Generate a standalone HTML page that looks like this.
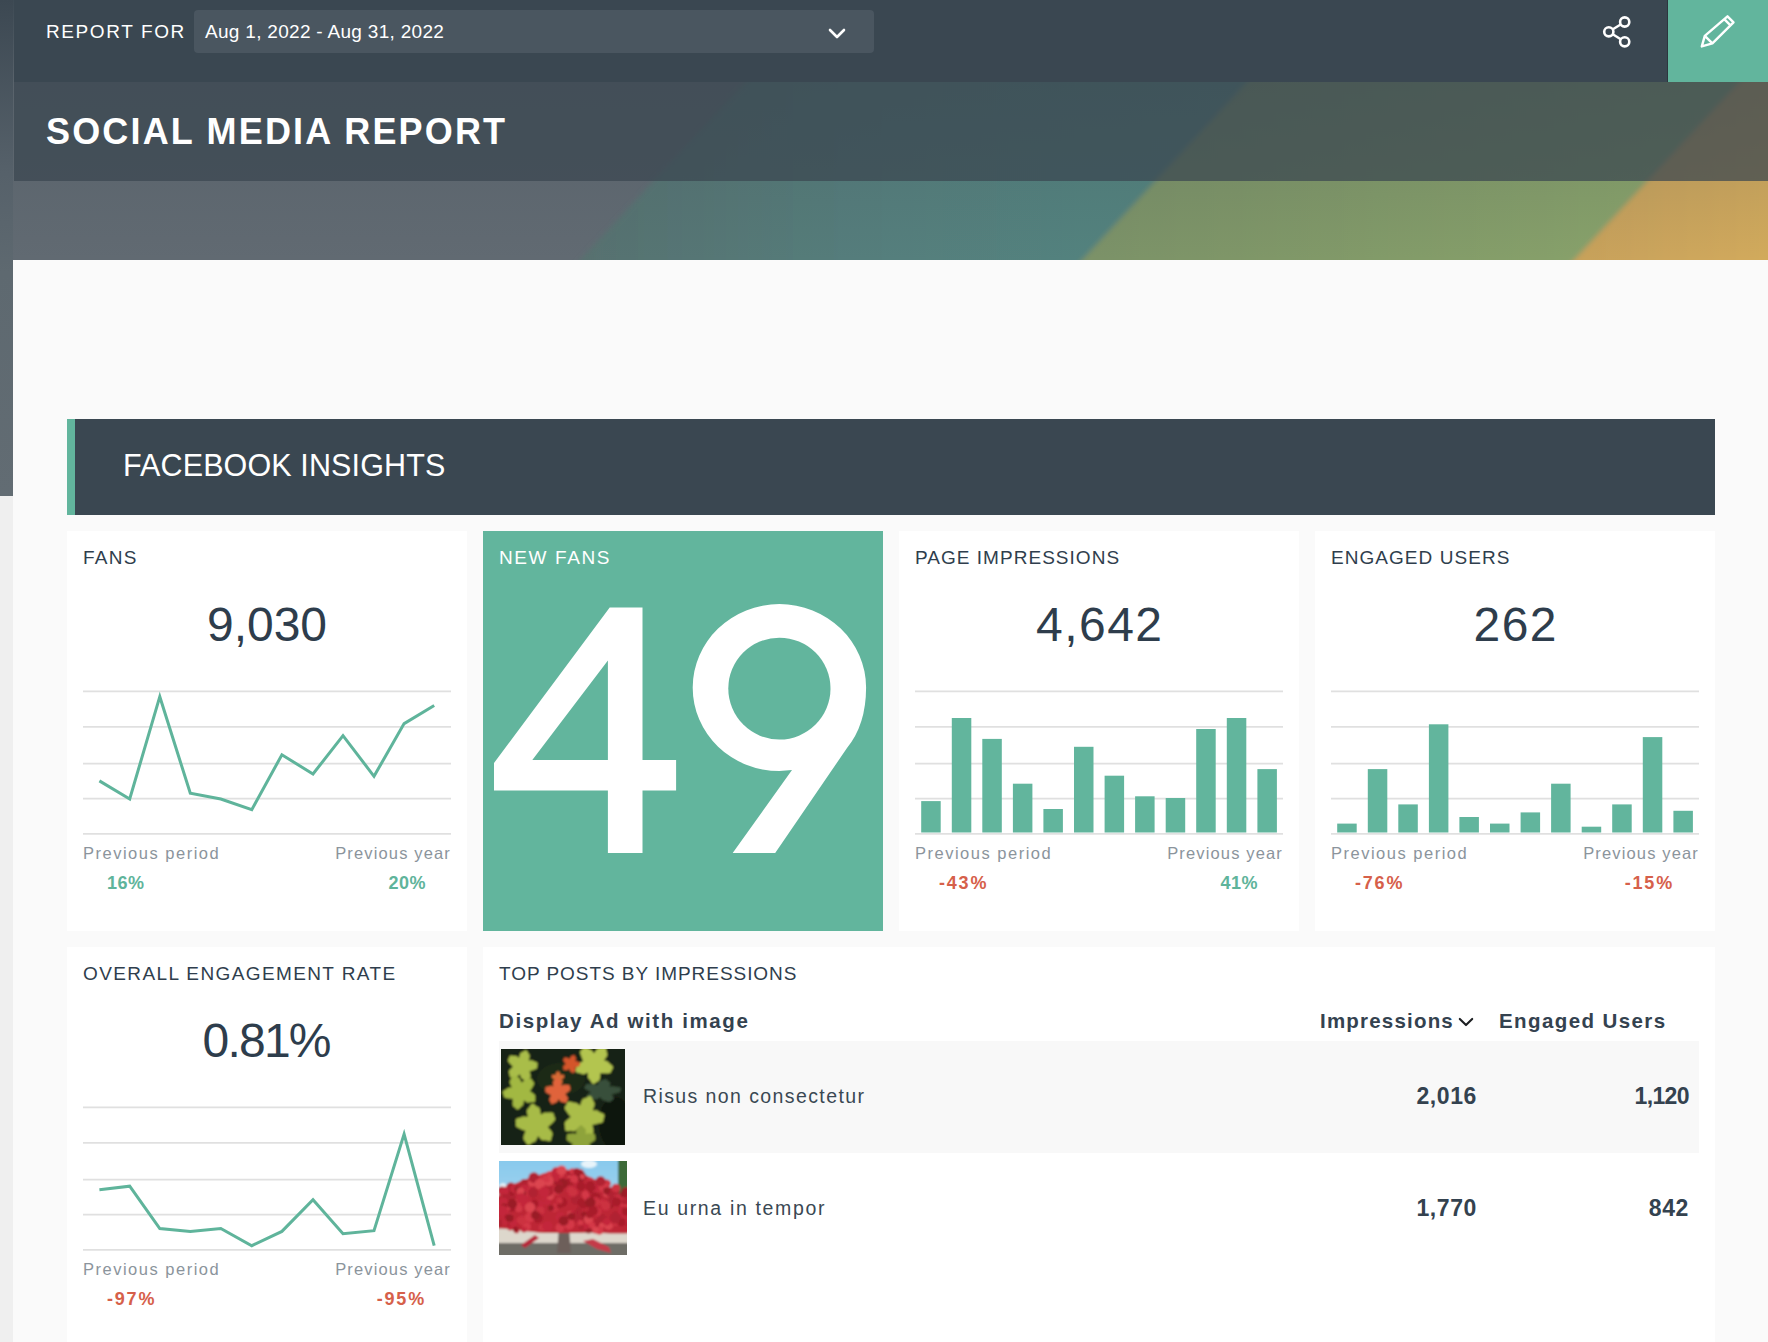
<!DOCTYPE html>
<html><head><meta charset="utf-8">
<style>
*{margin:0;padding:0;box-sizing:border-box}
html,body{width:1768px;height:1342px;overflow:hidden;background:#efefef;font-family:"Liberation Sans",sans-serif}
.abs{position:absolute}
.t{position:absolute;white-space:nowrap;line-height:1}
#hdr{position:absolute;left:0;top:0;width:1768px;height:496px}
#content{position:absolute;left:13px;top:260px;width:1755px;height:1082px;background:#fafafa}
.card{position:absolute;background:#fff}
.ctitle{position:absolute;left:16px;top:16.5px;font-size:19px;color:#2f3e4d;letter-spacing:1.3px;line-height:1}
.big{position:absolute;left:0;width:400px;top:69.5px;text-align:center;font-size:48px;color:#2e3d4c;line-height:1}
.prev{position:absolute;top:314px;font-size:16.5px;color:#8b949c;letter-spacing:1.3px;line-height:1}
.pct{position:absolute;top:343px;font-size:18px;font-weight:bold;letter-spacing:0.5px;line-height:1}
.pp{left:16px;letter-spacing:1.5px}.py{right:16px;letter-spacing:1.15px}.pl{left:40px}.pr{right:41px}
.g{color:#5fb49b}.r{color:#d6604a}
</style></head><body>
<div id="hdr">
<svg width="1768" height="496" viewBox="0 0 1768 496" style="position:absolute;left:0;top:0">
<defs>
<filter id="soft" x="-5%" y="-5%" width="110%" height="110%"><feGaussianBlur stdDeviation="2.5"/></filter>
<linearGradient id="gteal" gradientUnits="userSpaceOnUse" x1="560" y1="0" x2="1300" y2="0"><stop offset="0" stop-color="#58706f"/><stop offset="0.45" stop-color="#547f7d"/><stop offset="1" stop-color="#52857f"/></linearGradient>
<linearGradient id="ggreen" gradientUnits="userSpaceOnUse" x1="1060" y1="0" x2="1760" y2="0"><stop offset="0" stop-color="#7b9167"/><stop offset="1" stop-color="#8ba66b"/></linearGradient>
<linearGradient id="gorange" gradientUnits="userSpaceOnUse" x1="1550" y1="0" x2="1768" y2="0"><stop offset="0" stop-color="#c6a05a"/><stop offset="1" stop-color="#d2aa5c"/></linearGradient>
<linearGradient id="fade" x1="0" y1="0" x2="0" y2="1">
<stop offset="0" stop-color="#3a4751" stop-opacity="0.9"/>
<stop offset="0.32" stop-color="#3a4751" stop-opacity="0.2"/>
<stop offset="0.7" stop-color="#3a4751" stop-opacity="0.1"/>
<stop offset="1" stop-color="#3a4751" stop-opacity="0"/>
</linearGradient>
<linearGradient id="strip" x1="0" y1="0" x2="0" y2="1">
<stop offset="0" stop-color="#3c4852"/>
<stop offset="0.35" stop-color="#56616a"/>
<stop offset="0.55" stop-color="#5e6970"/>
<stop offset="1" stop-color="#626c73"/>
</linearGradient>
</defs>
<rect x="0" y="0" width="1768" height="260" fill="#616a72"/>
<g filter="url(#soft)">
<polygon points="840.4,-20 1342.4,-20 1054.1,290 552.1,290" fill="url(#gteal)"/>
<polygon points="1342.4,-20 1834.4,-20 1546.1,290 1054.1,290" fill="url(#ggreen)"/>
<polygon points="1834.4,-20 1900,-20 1900,290 1546.1,290" fill="url(#gorange)"/>
</g>
<rect x="0" y="0" width="1768" height="260" fill="url(#fade)"/>
<rect x="0" y="0" width="13" height="496" fill="url(#strip)"/>
</svg>
<!-- top bar -->
<div class="abs" style="left:14px;top:0;width:1754px;height:82px;background:#3a4751"></div>
<!-- title band -->
<div class="abs" style="left:14px;top:82px;width:1754px;height:99px;background:rgba(58,71,81,0.72)"></div>
<div class="t" id="rf" style="left:46px;top:22px;font-size:19px;color:#fff;letter-spacing:1.6px">REPORT FOR</div>
<div class="abs" style="left:194px;top:10px;width:680px;height:43px;background:#4a5660;border-radius:4px"></div>
<div class="t" id="date" style="left:205px;top:22px;font-size:19px;color:#fff;letter-spacing:0.3px">Aug 1, 2022 - Aug 31, 2022</div>
<svg class="abs" style="left:827px;top:27.5px" width="20" height="12" viewBox="0 0 20 12"><polyline points="3,2 10,9 17,2" fill="none" stroke="#fff" stroke-width="2.6" stroke-linecap="round" stroke-linejoin="round"/></svg>
<div class="t" id="smr" style="left:46px;top:114px;font-size:36px;font-weight:bold;color:#fff;letter-spacing:2.17px">SOCIAL MEDIA REPORT</div>
<!-- share icon -->
<svg class="abs" style="left:1596px;top:10px" width="40" height="44" viewBox="1596 10 40 44">
<line x1="1608.8" y1="31.8" x2="1624.7" y2="22" stroke="#fff" stroke-width="2.5"/>
<line x1="1608.8" y1="31.8" x2="1624.7" y2="41.8" stroke="#fff" stroke-width="2.5"/>
<circle cx="1624.7" cy="22" r="4.6" fill="#3a4751" stroke="#fff" stroke-width="2.6"/>
<circle cx="1608.8" cy="31.8" r="4.6" fill="#3a4751" stroke="#fff" stroke-width="2.6"/>
<circle cx="1624.7" cy="41.8" r="4.6" fill="#3a4751" stroke="#fff" stroke-width="2.6"/>
</svg>
<!-- edit button -->
<div class="abs" style="left:1667px;top:0;width:1px;height:82px;background:#2c363e"></div>
<div class="abs" style="left:1668px;top:0;width:100px;height:82px;background:#62b59d"></div>
<svg class="abs" style="left:1690px;top:4.2px" width="56" height="56" viewBox="1690 5 56 56">
<path d="M1727.5,17.3 L1733.5,23.3 L1712.4,44.4 L1701.8,47.4 L1704.8,36.8 Z M1724.5,20.3 L1730.5,26.3 M1704.8,36.8 L1712.4,44.4" fill="none" stroke="#fff" stroke-width="2.4" stroke-linejoin="round"/>
</svg>
</div>

<div id="content"></div>

<!-- Facebook insights bar -->
<div class="abs" style="left:67px;top:419px;width:1648px;height:96px;background:#3a4751"></div>
<div class="abs" style="left:67px;top:419px;width:8px;height:96px;background:#62b59d"></div>
<div class="t" id="fbi" style="left:123px;top:450px;font-size:30.5px;color:#fff;letter-spacing:0.12px">FACEBOOK INSIGHTS</div>

<!-- card 1 FANS -->
<div class="card" style="left:67px;top:531px;width:400px;height:400px">
<div class="ctitle" id="c1t">FANS</div>
<div class="big" id="c1n">9,030</div>
<svg class="abs" style="left:0;top:0" width="400" height="400" viewBox="67 531 400 400">
<g stroke="#e0e0e0" stroke-width="1.7">
<line x1="83" y1="691.4" x2="451" y2="691.4"/><line x1="83" y1="726.8" x2="451" y2="726.8"/><line x1="83" y1="763.7" x2="451" y2="763.7"/><line x1="83" y1="798.7" x2="451" y2="798.7"/><line x1="83" y1="833.8" x2="451" y2="833.8"/>
</g>
<polyline fill="none" stroke="#5fb49b" stroke-width="3" stroke-linejoin="miter" points="99.4,780.9 129.7,799 159.8,696.7 190.3,793.3 220.8,799 251.8,809.6 281.9,754.8 313,774 343,735.6 374,776.3 404.1,723.6 434.2,705.5"/>
</svg>
<div class="prev pp" id="c1pp">Previous period</div>
<div class="prev py" id="c1py">Previous year</div>
<div class="pct g pl" id="c1a">16%</div>
<div class="pct g pr" id="c1b">20%</div>
</div>

<!-- card 2 NEW FANS -->
<div class="card" style="left:483px;top:531px;width:400px;height:400px;background:#62b59d">
<div class="ctitle" style="color:#fff;letter-spacing:1.6px">NEW FANS</div>
<svg class="abs" style="left:0;top:0" width="400" height="400" viewBox="483 531 400 400">
<path fill="#fff" d="M609.7,607.5 L642.5,607.5 L642.5,760 L676.1,760 L676.1,790.6 L642.5,790.6 L642.5,853 L607.9,853 L607.9,790.6 L494,790.6 L494,763 Z M532.3,760 L607.9,760 L607.9,660.4 Z" fill-rule="evenodd"/>
<path fill="#fff" d="M732.7,853 L775.2,853 L847,748 Q866,725 866.1,687.6 A86.7,83.5 0 0 0 779.4,604.1 A86.7,83.5 0 0 0 692.7,687.6 A86.7,83.5 0 0 0 779.4,771.1 L792,770 Z"/>
<ellipse cx="779.4" cy="688.6" rx="51.1" ry="50.9" fill="#62b59d"/>
</svg>
</div>

<!-- card 3 PAGE IMPRESSIONS -->
<div class="card" style="left:899px;top:531px;width:400px;height:400px">
<div class="ctitle" style="letter-spacing:1.03px">PAGE IMPRESSIONS</div>
<div class="big" style="letter-spacing:1.5px;text-indent:1.5px">4,642</div>
<svg class="abs" style="left:0;top:0" width="400" height="400" viewBox="899 531 400 400">
<g stroke="#e0e0e0" stroke-width="1.7">
<line x1="915" y1="691.4" x2="1283" y2="691.4"/><line x1="915" y1="726.8" x2="1283" y2="726.8"/><line x1="915" y1="763.7" x2="1283" y2="763.7"/><line x1="915" y1="798.7" x2="1283" y2="798.7"/><line x1="915" y1="833.8" x2="1283" y2="833.8"/>
</g>
<g fill="#62b59d"><rect x="921.2" y="801.1" width="19.5" height="31.4"/><rect x="951.8" y="718.0" width="19.5" height="114.5"/><rect x="982.3" y="738.9" width="19.5" height="93.6"/><rect x="1012.9" y="783.7" width="19.5" height="48.8"/><rect x="1043.4" y="809.0" width="19.5" height="23.5"/><rect x="1074.0" y="746.8" width="19.5" height="85.7"/><rect x="1104.6" y="775.7" width="19.5" height="56.8"/><rect x="1135.1" y="796.3" width="19.5" height="36.2"/><rect x="1165.7" y="798.0" width="19.5" height="34.5"/><rect x="1196.2" y="729.0" width="19.5" height="103.5"/><rect x="1226.8" y="718.0" width="19.5" height="114.5"/><rect x="1257.4" y="769.1" width="19.5" height="63.4"/></g>
</svg>
<div class="prev pp">Previous period</div>
<div class="prev py">Previous year</div>
<div class="pct r pl" style="letter-spacing:1.8px">-43%</div>
<div class="pct g pr">41%</div>
</div>

<!-- card 4 ENGAGED USERS -->
<div class="card" style="left:1315px;top:531px;width:400px;height:400px">
<div class="ctitle" style="letter-spacing:1.05px">ENGAGED USERS</div>
<div class="big" style="letter-spacing:1.5px;text-indent:1.5px">262</div>
<svg class="abs" style="left:0;top:0" width="400" height="400" viewBox="1315 531 400 400">
<g stroke="#e0e0e0" stroke-width="1.7">
<line x1="1331" y1="691.4" x2="1699" y2="691.4"/><line x1="1331" y1="726.8" x2="1699" y2="726.8"/><line x1="1331" y1="763.7" x2="1699" y2="763.7"/><line x1="1331" y1="798.7" x2="1699" y2="798.7"/><line x1="1331" y1="833.8" x2="1699" y2="833.8"/>
</g>
<g fill="#62b59d"><rect x="1337.2" y="823.6" width="19.5" height="8.9"/><rect x="1367.8" y="769.1" width="19.5" height="63.4"/><rect x="1398.3" y="804.4" width="19.5" height="28.1"/><rect x="1428.9" y="724.3" width="19.5" height="108.2"/><rect x="1459.4" y="817.0" width="19.5" height="15.5"/><rect x="1490.0" y="823.6" width="19.5" height="8.9"/><rect x="1520.6" y="812.4" width="19.5" height="20.1"/><rect x="1551.1" y="783.7" width="19.5" height="48.8"/><rect x="1581.7" y="826.7" width="19.5" height="5.8"/><rect x="1612.2" y="804.4" width="19.5" height="28.1"/><rect x="1642.8" y="737.1" width="19.5" height="95.4"/><rect x="1673.4" y="810.8" width="19.5" height="21.7"/></g>
</svg>
<div class="prev pp">Previous period</div>
<div class="prev py">Previous year</div>
<div class="pct r pl" style="letter-spacing:1.8px">-76%</div>
<div class="pct r pr" style="letter-spacing:1.8px">-15%</div>
</div>

<!-- card 5 OVERALL ENGAGEMENT RATE -->
<div class="card" style="left:67px;top:947px;width:400px;height:420px">
<div class="ctitle" style="letter-spacing:1.39px">OVERALL ENGAGEMENT RATE</div>
<div class="big" style="letter-spacing:-1.75px;text-indent:-1.75px">0.81%</div>
<svg class="abs" style="left:0;top:0" width="400" height="400" viewBox="67 947 400 400">
<g stroke="#e0e0e0" stroke-width="1.7">
<line x1="83" y1="1107.4" x2="451" y2="1107.4"/><line x1="83" y1="1142.8" x2="451" y2="1142.8"/><line x1="83" y1="1179.7" x2="451" y2="1179.7"/><line x1="83" y1="1214.7" x2="451" y2="1214.7"/><line x1="83" y1="1249.8" x2="451" y2="1249.8"/>
</g>
<polyline fill="none" stroke="#5fb49b" stroke-width="3" points="99.4,1189.8 129.7,1186.2 159.8,1228.5 190.3,1231.4 220.8,1228.5 251.8,1245.7 281.9,1231.4 313,1199.7 343,1233.7 374,1230.7 404.1,1134.1 434.2,1245.7"/>
</svg>
<div class="prev pp">Previous period</div>
<div class="prev py">Previous year</div>
<div class="pct r pl" style="letter-spacing:1.8px">-97%</div>
<div class="pct r pr" style="letter-spacing:1.8px">-95%</div>
</div>

<!-- card 6 TOP POSTS -->
<div class="card" style="left:483px;top:947px;width:1232px;height:420px">
<div class="ctitle" id="c6t" style="letter-spacing:0.95px">TOP POSTS BY IMPRESSIONS</div>
</div>
<div class="t" id="dah" style="left:499px;top:1011px;font-size:20.5px;font-weight:bold;color:#34424f;letter-spacing:1.6px">Display Ad with image</div>
<div class="t" id="imph" style="left:1320px;top:1011px;font-size:20.5px;font-weight:bold;color:#34424f;letter-spacing:1.2px">Impressions</div>
<svg class="abs" style="left:1457px;top:1014px" width="18" height="16" viewBox="0 0 18 16"><polyline points="2.8,4.9 9,11.1 15.2,4.9" fill="none" stroke="#1c1f22" stroke-width="2.1" stroke-linecap="round" stroke-linejoin="round"/></svg>
<div class="t" id="euh" style="left:1499px;top:1011px;font-size:20.5px;font-weight:bold;color:#34424f;letter-spacing:1.4px">Engaged Users</div>
<div class="abs" style="left:499px;top:1041px;width:1200px;height:112px;background:#f8f8f8"></div>
<svg class="abs" id="img1" style="left:501px;top:1049px" width="124" height="96" viewBox="0 0 124 96">
<defs><filter id="lb" x="-10%" y="-10%" width="120%" height="120%"><feGaussianBlur stdDeviation="0.9"/></filter><clipPath id="c1"><rect width="124" height="96"/></clipPath></defs>
<g clip-path="url(#c1)"><g filter="url(#lb)">
<rect x="-5" y="-5" width="134" height="106" fill="#172012"/>
<ellipse cx="60" cy="30" rx="24" ry="16" fill="#1e2b18"/>
<ellipse cx="114" cy="74" rx="16" ry="26" fill="#11150f"/>
<polygon points="36.2,17.0 36.3,18.1 36.1,19.1 35.0,20.0 33.5,20.6 32.1,21.0 31.0,21.4 29.9,21.7 28.9,21.9 28.6,22.5 28.8,23.5 29.2,24.9 29.6,26.5 29.6,28.0 29.2,29.1 28.4,29.7 27.6,30.6 26.9,31.7 26.0,32.4 24.8,32.3 23.5,31.3 22.4,30.4 21.5,30.0 20.6,29.5 19.8,28.4 19.3,26.6 18.9,25.5 18.2,25.7 17.0,26.9 15.7,27.9 14.6,28.1 13.6,27.9 12.4,28.0 10.9,28.3 9.4,28.2 8.7,27.4 8.5,26.1 8.4,24.9 8.1,23.9 7.9,22.8 8.3,21.6 9.3,20.3 10.5,19.2 11.4,18.3 11.8,17.6 11.4,17.0 10.5,16.3 9.8,15.4 8.9,14.4 7.8,13.2 7.0,11.9 7.0,10.8 7.6,9.9 8.0,8.9 8.3,7.8 8.9,6.8 10.1,6.5 11.8,6.7 13.2,7.0 14.3,7.0 15.3,7.1 16.6,7.9 17.6,8.6 18.2,8.4 18.5,7.1 18.9,5.3 19.6,3.9 20.5,3.3 21.5,3.0 22.5,2.5 23.7,1.6 25.0,1.2 26.0,1.7 26.7,3.0 27.2,4.2 27.9,5.0 28.5,5.8 28.8,7.1 28.4,8.8 27.8,10.4 27.8,11.3 28.7,11.4 30.2,11.3 31.4,11.5 32.2,12.0 33.4,12.5 34.9,13.0 36.3,13.8 36.7,14.8 36.4,15.9" fill="#a9bd48"/>
<polygon points="30.1,43.0 31.5,43.9 32.9,45.0 34.0,46.2 34.4,47.4 34.2,48.5 34.1,49.7 34.3,51.1 34.1,52.4 33.0,53.1 31.2,53.2 29.6,53.3 28.5,53.6 27.5,53.8 26.0,53.4 24.4,52.3 23.2,51.6 22.7,52.3 22.6,54.1 22.2,55.9 21.4,56.8 20.5,57.4 19.5,58.3 18.4,59.6 17.2,60.6 15.9,60.4 14.9,59.4 14.0,58.5 13.0,57.9 12.1,57.2 11.6,55.8 11.6,54.0 11.8,52.3 11.9,50.9 11.7,50.0 10.9,49.8 9.7,49.8 8.4,49.6 7.1,49.4 5.3,49.1 3.7,48.6 2.8,47.6 2.7,46.5 2.4,45.3 1.8,44.2 1.6,43.0 2.4,41.8 4.0,40.9 5.4,40.1 6.3,39.4 7.3,38.7 8.8,38.5 10.3,38.4 10.6,37.8 9.9,36.4 9.0,34.6 8.6,33.0 8.9,31.8 9.5,30.9 10.0,29.7 10.4,28.2 11.1,26.9 12.4,26.7 13.9,27.2 15.2,27.8 16.4,28.0 17.5,28.3 18.5,29.2 19.4,30.9 20.1,32.6 20.7,33.4 21.5,32.9 22.7,31.7 23.8,31.0 24.9,30.9 26.2,30.5 27.9,29.8 29.5,29.5 30.6,30.1 31.2,31.2 31.8,32.3 32.6,33.1 33.1,34.2 32.9,35.6 32.0,37.2 31.2,38.6 30.5,39.7 29.8,40.7 29.1,41.6 29.2,42.3" fill="#a2b843"/>
<polygon points="109.1,15.0 110.7,16.2 111.9,17.7 112.0,19.0 111.2,20.2 110.5,21.4 110.1,22.6 109.5,23.7 107.9,24.3 105.9,24.4 104.1,24.3 102.6,24.3 101.2,24.2 100.0,24.0 99.4,24.5 99.2,25.8 99.1,27.6 98.9,29.6 98.3,31.3 97.3,32.3 96.1,32.8 94.9,33.4 93.7,34.4 92.3,34.9 91.0,34.2 89.9,32.5 89.0,31.0 88.1,30.1 87.2,29.3 86.8,27.6 87.0,25.4 87.0,23.9 86.1,23.8 84.3,24.7 82.3,25.3 81.0,25.1 79.9,24.5 78.5,24.1 76.6,23.7 75.0,23.0 74.4,21.8 74.8,20.2 75.2,18.8 75.2,17.5 75.4,16.2 76.5,15.0 78.2,14.0 80.0,13.2 81.4,12.5 82.1,11.9 81.9,11.0 81.2,9.8 80.7,8.5 80.2,7.0 79.4,5.1 79.0,3.3 79.5,2.0 80.5,1.1 81.5,0.2 82.2,-1.0 83.3,-1.8 84.9,-1.7 86.7,-0.7 88.2,0.2 89.4,0.7 90.6,1.3 91.7,2.6 92.6,3.9 93.4,4.0 94.3,2.6 95.5,0.7 96.9,-0.6 98.2,-1.0 99.4,-0.9 100.9,-1.1 102.6,-1.6 104.2,-1.6 105.1,-0.5 105.4,1.2 105.6,2.9 106.0,4.1 106.4,5.3 106.1,6.8 105.0,8.6 103.6,10.3 103.2,11.3 104.2,11.8 106.0,12.2 107.3,13.0 108.0,13.9" fill="#b3c54f"/>
<polygon points="119.8,42.0 119.4,42.8 118.0,43.4 116.2,43.9 114.6,44.3 113.4,44.7 112.0,44.9 111.0,45.2 110.8,45.7 111.3,46.5 112.0,47.6 112.6,48.7 112.7,49.8 112.0,50.5 111.1,51.0 110.3,51.7 109.6,52.6 108.4,53.1 106.9,52.8 105.2,52.2 103.8,51.6 102.7,51.4 101.5,51.1 100.5,50.1 99.8,48.9 99.2,48.3 98.2,48.7 96.8,49.7 95.3,50.4 94.1,50.5 92.8,50.5 91.2,50.7 89.3,51.0 87.7,50.9 86.9,50.2 86.7,49.2 86.4,48.4 85.8,47.7 85.6,46.9 86.2,45.9 87.4,45.0 88.7,44.1 89.6,43.4 89.8,42.9 89.0,42.5 87.9,42.0 86.9,41.4 85.7,40.7 84.2,39.9 83.2,38.9 83.4,38.1 84.0,37.5 84.4,36.7 84.6,35.8 85.4,35.2 87.1,35.0 89.1,35.1 90.8,35.2 92.0,35.1 93.4,35.2 95.0,35.8 96.2,36.1 96.8,35.7 97.0,34.6 97.4,33.3 98.2,32.4 99.2,31.9 100.4,31.6 101.6,31.1 103.0,30.4 104.5,30.1 105.7,30.7 106.6,31.6 107.5,32.4 108.4,32.9 109.2,33.5 109.4,34.5 109.0,35.8 108.6,37.0 108.8,37.5 110.2,37.4 112.0,37.2 113.4,37.4 114.5,37.7 116.1,38.0 118.1,38.3 119.6,38.8 119.9,39.6 119.6,40.4 119.6,41.2" fill="#38503a"/>
<polygon points="49.2,76.0 48.0,76.9 47.1,77.7 47.2,78.6 48.2,79.8 49.6,81.3 50.9,83.1 51.6,84.8 51.4,86.2 50.8,87.5 50.4,89.0 50.2,90.7 49.3,91.9 47.6,92.1 45.5,91.6 43.8,91.2 42.5,91.3 41.1,91.2 39.5,89.9 38.0,88.1 37.0,87.3 36.3,88.4 35.5,90.6 34.4,92.3 33.2,92.9 31.9,93.3 30.4,94.3 28.7,95.5 27.0,95.9 25.7,95.0 24.9,93.5 24.1,92.2 23.1,91.2 22.4,90.0 22.5,88.1 23.1,86.0 23.9,84.1 24.4,82.6 24.2,81.7 23.1,81.3 21.7,80.9 20.3,80.2 18.6,79.5 16.6,78.6 15.1,77.4 14.7,76.0 15.0,74.6 14.9,73.2 14.6,71.7 15.0,70.3 16.6,69.3 18.7,68.8 20.4,68.3 21.6,67.6 23.1,67.4 25.1,67.7 26.5,67.8 26.8,66.9 26.3,64.9 25.9,62.6 26.2,60.7 27.0,59.6 28.0,58.7 28.9,57.3 29.9,55.6 31.2,54.7 32.8,55.1 34.3,56.4 35.7,57.4 36.9,57.9 38.1,58.6 38.9,60.3 39.3,62.6 39.6,64.7 40.2,65.4 41.5,64.8 43.2,63.8 44.7,63.6 46.0,63.7 47.8,63.6 50.0,63.4 51.9,63.8 52.7,64.9 52.9,66.5 53.4,67.8 54.0,69.1 54.2,70.5 53.2,72.1 51.6,73.7 50.3,74.9" fill="#a7bb46"/>
<polygon points="103.1,68.0 102.6,69.4 102.5,70.9 102.3,72.3 101.1,73.5 99.0,74.2 96.9,74.6 95.3,75.1 93.8,75.4 92.4,75.5 91.6,76.1 91.6,77.3 92.0,79.1 92.4,81.3 92.4,83.5 91.8,85.0 90.7,85.9 89.6,86.8 88.5,88.1 87.3,89.3 85.8,89.3 84.1,88.0 82.6,86.5 81.4,85.7 80.2,85.1 79.2,83.8 78.7,81.4 78.3,79.4 77.5,79.1 75.9,80.4 74.0,81.9 72.4,82.3 71.1,81.9 69.6,81.8 67.5,82.0 65.4,81.9 64.2,80.9 64.1,79.2 64.1,77.5 63.8,76.1 63.5,74.7 64.1,73.1 65.5,71.5 67.2,70.1 68.7,68.9 69.5,68.0 69.2,67.1 68.2,66.1 67.2,64.9 66.3,63.5 65.0,61.8 63.9,59.9 63.7,58.3 64.5,57.0 65.3,55.9 65.8,54.4 66.5,53.1 68.0,52.5 70.2,52.9 72.2,53.5 73.8,53.7 75.1,53.9 76.7,54.8 78.1,56.1 79.1,56.3 79.7,54.9 80.4,52.5 81.4,50.6 82.6,49.6 84.0,49.3 85.4,48.8 87.0,47.8 88.8,47.1 90.2,47.6 91.1,49.3 91.8,51.1 92.5,52.4 93.3,53.5 93.7,55.0 93.2,57.2 92.2,59.4 91.7,60.9 92.6,61.4 94.5,61.3 96.4,61.6 97.5,62.4 98.8,63.2 100.7,64.0 102.7,65.1 103.5,66.5" fill="#aabd49"/>
<polygon points="92.9,92.0 91.6,92.8 90.7,93.5 89.7,94.1 88.8,94.5 88.4,95.1 88.7,95.9 89.4,97.0 90.2,98.4 90.8,99.8 90.7,101.0 90.2,101.9 89.7,102.7 89.3,103.9 88.8,105.0 87.7,105.4 86.3,104.9 85.0,104.3 83.9,104.0 83.0,103.9 82.0,103.3 81.0,101.8 80.3,100.6 79.7,100.6 79.0,101.8 78.0,103.3 77.0,103.9 76.1,104.0 75.0,104.3 73.7,104.9 72.3,105.4 71.2,105.0 70.7,103.9 70.3,102.7 69.8,101.9 69.3,101.0 69.2,99.8 69.8,98.4 70.6,97.0 71.3,95.9 71.6,95.1 71.2,94.5 70.3,94.1 69.3,93.5 68.4,92.8 67.1,92.0 65.9,91.0 65.4,89.9 65.6,88.9 65.8,87.9 65.8,86.8 66.0,85.7 66.8,85.0 68.4,84.7 69.9,84.7 71.0,84.4 71.9,84.2 73.2,84.5 74.5,85.0 75.2,84.9 75.2,83.8 75.1,82.0 75.3,80.4 75.9,79.5 76.7,78.9 77.6,78.3 78.4,77.2 79.5,76.3 80.5,76.3 81.6,77.2 82.4,78.3 83.3,78.9 84.1,79.5 84.7,80.4 84.9,82.0 84.8,83.8 84.8,84.9 85.5,85.0 86.8,84.5 88.1,84.2 89.0,84.4 90.1,84.7 91.6,84.7 93.2,85.0 94.0,85.7 94.2,86.8 94.2,87.9 94.4,88.9 94.6,89.9 94.1,91.0" fill="#8ea33b"/>
<polygon points="79.0,15.0 78.8,15.6 78.8,16.2 78.7,16.8 78.2,17.3 77.3,17.6 76.4,17.8 75.7,18.0 75.1,18.2 74.4,18.2 74.1,18.5 74.1,19.0 74.3,19.8 74.5,20.7 74.5,21.6 74.2,22.3 73.7,22.7 73.2,23.0 72.8,23.6 72.3,24.1 71.6,24.1 70.9,23.6 70.3,22.9 69.7,22.6 69.2,22.3 68.8,21.8 68.6,20.8 68.4,19.9 68.1,19.8 67.4,20.3 66.6,20.9 65.9,21.1 65.3,21.0 64.7,20.9 63.8,21.0 62.9,21.0 62.4,20.5 62.3,19.8 62.3,19.1 62.2,18.5 62.1,17.9 62.3,17.2 62.9,16.5 63.6,15.9 64.3,15.4 64.6,15.0 64.5,14.6 64.1,14.2 63.7,13.7 63.3,13.1 62.7,12.4 62.2,11.5 62.2,10.8 62.5,10.3 62.9,9.8 63.1,9.2 63.4,8.6 64.0,8.4 64.9,8.5 65.8,8.8 66.5,8.9 67.0,8.9 67.7,9.4 68.3,9.9 68.8,10.0 69.0,9.4 69.3,8.4 69.7,7.5 70.3,7.1 70.8,7.0 71.5,6.8 72.2,6.3 72.9,6.0 73.5,6.3 73.9,7.0 74.2,7.8 74.5,8.3 74.9,8.8 75.0,9.4 74.8,10.4 74.4,11.3 74.2,12.0 74.5,12.2 75.4,12.1 76.2,12.3 76.6,12.6 77.2,12.9 78.0,13.3 78.9,13.8 79.2,14.4" fill="#d4552c"/>
<polygon points="62.6,29.0 62.0,29.4 61.6,29.7 61.2,29.9 60.8,30.1 60.6,30.3 60.8,30.7 61.1,31.2 61.4,31.8 61.7,32.4 61.7,32.9 61.4,33.3 61.2,33.7 61.0,34.2 60.8,34.6 60.3,34.8 59.7,34.6 59.2,34.3 58.7,34.2 58.3,34.2 57.9,33.9 57.4,33.3 57.1,32.7 56.9,32.7 56.6,33.3 56.1,33.9 55.7,34.2 55.3,34.2 54.8,34.3 54.3,34.6 53.7,34.8 53.2,34.6 53.0,34.2 52.8,33.7 52.6,33.3 52.3,32.9 52.3,32.4 52.6,31.8 52.9,31.2 53.2,30.7 53.4,30.3 53.2,30.1 52.8,29.9 52.4,29.7 52.0,29.4 51.4,29.0 50.9,28.6 50.7,28.1 50.7,27.7 50.9,27.2 50.9,26.8 50.9,26.3 51.3,26.0 52.0,25.9 52.6,25.8 53.1,25.7 53.5,25.6 54.1,25.7 54.6,26.0 54.9,25.9 54.9,25.4 54.9,24.7 55.0,24.0 55.2,23.6 55.6,23.3 56.0,23.0 56.3,22.6 56.8,22.2 57.2,22.2 57.7,22.6 58.0,23.0 58.4,23.3 58.8,23.6 59.0,24.0 59.1,24.7 59.1,25.4 59.1,25.9 59.4,26.0 59.9,25.7 60.5,25.6 60.9,25.7 61.4,25.8 62.0,25.9 62.7,26.0 63.1,26.3 63.1,26.8 63.1,27.2 63.3,27.7 63.3,28.1 63.1,28.6" fill="#d86a36"/>
<polygon points="66.9,43.0 66.1,43.6 65.3,44.2 64.7,44.6 64.5,45.2 65.0,45.9 65.7,46.9 66.5,48.1 67.0,49.2 66.9,50.2 66.5,50.9 66.1,51.8 65.9,52.9 65.4,53.7 64.4,53.9 63.1,53.6 62.0,53.2 61.1,53.1 60.3,53.0 59.3,52.3 58.4,51.1 57.8,50.3 57.3,50.6 56.7,51.9 55.9,53.1 55.1,53.6 54.3,53.7 53.4,54.1 52.2,54.8 51.1,55.1 50.2,54.7 49.8,53.7 49.3,52.8 48.8,52.1 48.3,51.4 48.3,50.3 48.8,49.0 49.4,47.8 49.9,46.8 49.9,46.1 49.4,45.8 48.5,45.4 47.7,45.0 46.8,44.4 45.6,43.8 44.5,43.0 44.2,42.1 44.4,41.2 44.5,40.3 44.3,39.4 44.5,38.5 45.4,37.8 46.8,37.6 48.0,37.4 48.8,37.1 49.7,36.9 50.9,37.1 51.9,37.4 52.3,37.0 52.2,35.9 52.0,34.4 52.2,33.1 52.7,32.3 53.4,31.8 54.0,31.1 54.7,30.1 55.6,29.4 56.5,29.5 57.4,30.3 58.2,31.1 59.0,31.6 59.7,32.0 60.3,33.0 60.5,34.4 60.5,35.8 60.7,36.6 61.5,36.4 62.6,35.8 63.6,35.7 64.4,35.8 65.5,35.9 66.8,35.9 68.1,36.1 68.7,36.8 68.9,37.7 69.0,38.6 69.3,39.5 69.5,40.3 68.9,41.3 67.9,42.2" fill="#e0633a"/>
</g></g></svg>
<div class="t" id="r1" style="left:643px;top:1086.5px;font-size:19.5px;color:#3a4853;letter-spacing:1.4px">Risus non consectetur</div>
<div class="t" id="n1a" style="right:291px;top:1085px;font-size:23px;font-weight:bold;color:#34424f;letter-spacing:0.6px">2,016</div>
<div class="t" id="n1b" style="right:79px;top:1085px;font-size:23px;font-weight:bold;color:#34424f;letter-spacing:-0.6px">1,120</div>
<svg class="abs" id="img2" style="left:499px;top:1161px" width="128" height="94" viewBox="0 0 128 94">
<defs><filter id="tb" x="-10%" y="-10%" width="120%" height="120%"><feGaussianBlur stdDeviation="0.9"/></filter><clipPath id="c2"><rect width="128" height="94"/></clipPath>
<linearGradient id="sky" x1="0" y1="0" x2="0" y2="1"><stop offset="0" stop-color="#86c8ec"/><stop offset="1" stop-color="#c4e4f2"/></linearGradient></defs>
<g clip-path="url(#c2)"><g filter="url(#tb)">
<rect x="-5" y="-5" width="138" height="104" fill="url(#sky)"/>
<ellipse cx="90" cy="3" rx="8" ry="4" fill="#e8f4fa"/>
<ellipse cx="4" cy="32" rx="6" ry="10" fill="#e6f2f8"/>
<rect x="119" y="-5" width="14" height="55" fill="#3d6a38"/>
<rect x="-5" y="64" width="138" height="20" fill="#ddd7cc"/>
<rect x="-5" y="82" width="138" height="17" fill="#6e6d66"/>
<rect x="112" y="66" width="20" height="5" fill="#55605a"/>
<path d="M60,66 L58,92 L72,92 L70,66 Z" fill="#6d5e5a"/>
<path d="M22,84 L36,74 L40,77 L26,87 Z" fill="#b8283a"/>
<path d="M84,80 L98,88 L112,92 L110,86 L94,78 Z" fill="#c43a4a"/>
<path d="M-5,40 C5,25 25,18 40,14 C55,8 70,6 82,12 C95,18 110,24 122,34 L133,45 L133,72 C110,74 95,70 82,72 L50,72 C30,72 10,66 -5,68 Z" fill="#bd2636"/>
<circle cx="40.0" cy="21.1" r="4.5" fill="#c3283a"/>
<circle cx="107.7" cy="22.6" r="4.2" fill="#cc3040"/>
<circle cx="25.2" cy="21.9" r="3.8" fill="#b02030"/>
<circle cx="8.3" cy="41.9" r="5.0" fill="#c3283a"/>
<circle cx="124.9" cy="50.1" r="4.2" fill="#c3283a"/>
<circle cx="74.5" cy="33.4" r="5.4" fill="#c3283a"/>
<circle cx="71.7" cy="17.3" r="3.8" fill="#cc3040"/>
<circle cx="12.0" cy="37.9" r="4.9" fill="#b02030"/>
<circle cx="10.0" cy="50.6" r="3.1" fill="#c3283a"/>
<circle cx="70.5" cy="12.9" r="2.7" fill="#b02030"/>
<circle cx="63.5" cy="41.4" r="4.8" fill="#a81c2c"/>
<circle cx="75.6" cy="36.9" r="3.4" fill="#9a1a28"/>
<circle cx="20.4" cy="58.9" r="2.7" fill="#d43846"/>
<circle cx="67.4" cy="62.4" r="4.7" fill="#d43846"/>
<circle cx="78.8" cy="14.2" r="4.0" fill="#b02030"/>
<circle cx="99.0" cy="22.9" r="4.0" fill="#c3283a"/>
<circle cx="126.8" cy="30.3" r="4.2" fill="#9a1a28"/>
<circle cx="115.1" cy="36.4" r="4.6" fill="#cc3040"/>
<circle cx="63.5" cy="57.6" r="2.7" fill="#c3283a"/>
<circle cx="124.5" cy="44.1" r="4.5" fill="#c3283a"/>
<circle cx="95.4" cy="30.9" r="4.2" fill="#dc4450"/>
<circle cx="107.8" cy="32.6" r="3.7" fill="#dc4450"/>
<circle cx="43.2" cy="66.5" r="3.6" fill="#cc3040"/>
<circle cx="11.9" cy="26.4" r="4.8" fill="#b02030"/>
<circle cx="96.4" cy="36.1" r="5.3" fill="#a81c2c"/>
<circle cx="7.0" cy="43.3" r="4.1" fill="#b02030"/>
<circle cx="107.4" cy="62.9" r="3.3" fill="#a81c2c"/>
<circle cx="130.2" cy="53.1" r="3.6" fill="#b02030"/>
<circle cx="16.5" cy="29.8" r="3.2" fill="#b02030"/>
<circle cx="-2.4" cy="58.7" r="3.0" fill="#d43846"/>
<circle cx="-3.4" cy="46.1" r="3.6" fill="#cc3040"/>
<circle cx="39.3" cy="19.8" r="5.1" fill="#cc3040"/>
<circle cx="85.1" cy="54.6" r="3.9" fill="#9a1a28"/>
<circle cx="102.1" cy="63.2" r="4.9" fill="#a81c2c"/>
<circle cx="50.1" cy="33.8" r="3.9" fill="#a81c2c"/>
<circle cx="4.5" cy="30.4" r="3.1" fill="#b02030"/>
<circle cx="11.0" cy="51.7" r="2.8" fill="#cc3040"/>
<circle cx="16.6" cy="26.2" r="3.6" fill="#c3283a"/>
<circle cx="5.6" cy="34.9" r="3.6" fill="#dc4450"/>
<circle cx="30.3" cy="34.3" r="3.6" fill="#c3283a"/>
<circle cx="11.7" cy="46.3" r="5.4" fill="#a81c2c"/>
<circle cx="61.8" cy="14.3" r="2.8" fill="#d43846"/>
<circle cx="96.7" cy="40.7" r="4.6" fill="#cc3040"/>
<circle cx="-0.9" cy="62.4" r="4.1" fill="#b02030"/>
<circle cx="89.8" cy="65.0" r="4.8" fill="#d43846"/>
<circle cx="129.1" cy="59.2" r="4.6" fill="#d43846"/>
<circle cx="66.5" cy="64.4" r="3.6" fill="#b02030"/>
<circle cx="68.4" cy="56.5" r="3.5" fill="#b02030"/>
<circle cx="79.4" cy="57.3" r="4.8" fill="#b02030"/>
<circle cx="105.6" cy="60.3" r="4.7" fill="#b02030"/>
<circle cx="23.2" cy="43.7" r="4.7" fill="#c3283a"/>
<circle cx="103.5" cy="41.5" r="3.1" fill="#cc3040"/>
<circle cx="126.1" cy="43.6" r="5.3" fill="#d43846"/>
<circle cx="125.9" cy="40.4" r="3.2" fill="#b02030"/>
<circle cx="59.9" cy="29.7" r="3.9" fill="#cc3040"/>
<circle cx="110.3" cy="43.4" r="4.5" fill="#9a1a28"/>
<circle cx="83.5" cy="60.2" r="2.9" fill="#a81c2c"/>
<circle cx="102.4" cy="56.4" r="3.9" fill="#b02030"/>
<circle cx="55.0" cy="48.0" r="2.8" fill="#dc4450"/>
<circle cx="49.8" cy="34.3" r="5.3" fill="#dc4450"/>
<circle cx="17.6" cy="69.7" r="2.6" fill="#cc3040"/>
<circle cx="119.1" cy="56.1" r="2.9" fill="#9a1a28"/>
<circle cx="77.0" cy="38.3" r="5.3" fill="#b02030"/>
<circle cx="70.6" cy="17.1" r="2.5" fill="#dc4450"/>
<circle cx="84.4" cy="41.9" r="5.3" fill="#a81c2c"/>
<circle cx="130.2" cy="36.3" r="5.1" fill="#c3283a"/>
<circle cx="30.2" cy="31.4" r="3.2" fill="#cc3040"/>
<circle cx="40.3" cy="43.7" r="5.0" fill="#c3283a"/>
<circle cx="119.8" cy="37.8" r="3.9" fill="#cc3040"/>
<circle cx="106.8" cy="44.6" r="5.0" fill="#cc3040"/>
<circle cx="13.8" cy="29.8" r="4.0" fill="#9a1a28"/>
<circle cx="55.9" cy="20.6" r="2.5" fill="#9a1a28"/>
<circle cx="16.4" cy="28.2" r="4.4" fill="#c3283a"/>
<circle cx="71.7" cy="29.0" r="4.1" fill="#cc3040"/>
<circle cx="61.6" cy="56.4" r="5.1" fill="#c3283a"/>
<circle cx="29.8" cy="30.6" r="4.8" fill="#cc3040"/>
<circle cx="57.5" cy="11.1" r="5.2" fill="#c3283a"/>
<circle cx="56.3" cy="46.5" r="4.0" fill="#cc3040"/>
<circle cx="23.1" cy="32.6" r="4.0" fill="#9a1a28"/>
<circle cx="61.0" cy="66.4" r="4.6" fill="#d43846"/>
<circle cx="121.5" cy="59.8" r="3.1" fill="#a81c2c"/>
<circle cx="14.7" cy="28.0" r="3.8" fill="#c3283a"/>
<circle cx="87.3" cy="36.4" r="3.1" fill="#d43846"/>
<circle cx="102.6" cy="64.4" r="3.0" fill="#dc4450"/>
<circle cx="83.5" cy="32.3" r="3.3" fill="#b02030"/>
<circle cx="127.6" cy="35.9" r="5.4" fill="#a81c2c"/>
<circle cx="116.4" cy="29.5" r="4.5" fill="#b02030"/>
<circle cx="18.0" cy="41.9" r="4.0" fill="#d43846"/>
<circle cx="53.3" cy="31.3" r="2.8" fill="#d43846"/>
<circle cx="-1.4" cy="49.6" r="3.8" fill="#c3283a"/>
<circle cx="48.3" cy="41.3" r="3.4" fill="#c3283a"/>
<circle cx="11.3" cy="66.2" r="3.2" fill="#c3283a"/>
<circle cx="7.4" cy="36.4" r="5.2" fill="#b02030"/>
<circle cx="32.8" cy="21.7" r="3.8" fill="#dc4450"/>
<circle cx="107.4" cy="31.1" r="2.9" fill="#cc3040"/>
<circle cx="73.6" cy="51.8" r="2.8" fill="#c3283a"/>
<circle cx="104.7" cy="26.3" r="5.2" fill="#d43846"/>
<circle cx="123.6" cy="50.0" r="4.9" fill="#c3283a"/>
<circle cx="78.7" cy="23.2" r="3.3" fill="#c3283a"/>
<circle cx="57.7" cy="29.9" r="4.2" fill="#d43846"/>
<circle cx="80.6" cy="12.6" r="4.6" fill="#c3283a"/>
<circle cx="127.8" cy="37.5" r="3.0" fill="#d43846"/>
<circle cx="81.5" cy="42.0" r="3.1" fill="#a81c2c"/>
<circle cx="64.0" cy="19.9" r="3.5" fill="#c3283a"/>
<circle cx="131.3" cy="31.5" r="2.6" fill="#cc3040"/>
<circle cx="70.9" cy="20.7" r="3.9" fill="#a81c2c"/>
<circle cx="10.5" cy="61.7" r="3.8" fill="#a81c2c"/>
<circle cx="70.2" cy="63.2" r="5.4" fill="#d43846"/>
<circle cx="89.5" cy="69.0" r="3.5" fill="#9a1a28"/>
<circle cx="115.9" cy="56.8" r="2.9" fill="#d43846"/>
<circle cx="129.5" cy="58.3" r="2.5" fill="#dc4450"/>
<circle cx="96.8" cy="28.1" r="3.0" fill="#c3283a"/>
<circle cx="86.5" cy="33.5" r="4.0" fill="#d43846"/>
<circle cx="77.4" cy="51.5" r="2.6" fill="#b02030"/>
<circle cx="17.4" cy="42.7" r="3.3" fill="#d43846"/>
<circle cx="128.3" cy="47.9" r="3.2" fill="#d43846"/>
<circle cx="25.6" cy="26.8" r="3.5" fill="#c3283a"/>
<circle cx="60.6" cy="39.7" r="3.1" fill="#cc3040"/>
<circle cx="101.6" cy="20.3" r="5.0" fill="#b02030"/>
<circle cx="50.3" cy="12.7" r="2.6" fill="#d43846"/>
<circle cx="81.6" cy="15.3" r="5.4" fill="#9a1a28"/>
<circle cx="98.1" cy="50.9" r="4.6" fill="#cc3040"/>
<circle cx="49.0" cy="29.9" r="5.5" fill="#b02030"/>
<circle cx="34.6" cy="48.6" r="2.9" fill="#9a1a28"/>
<circle cx="109.6" cy="64.4" r="4.4" fill="#dc4450"/>
<circle cx="91.3" cy="41.4" r="5.2" fill="#9a1a28"/>
<circle cx="64.6" cy="59.9" r="4.9" fill="#9a1a28"/>
<circle cx="89.4" cy="58.2" r="4.6" fill="#dc4450"/>
<circle cx="83.4" cy="15.6" r="2.6" fill="#dc4450"/>
<circle cx="45.1" cy="17.4" r="5.0" fill="#cc3040"/>
<circle cx="2.9" cy="29.6" r="4.1" fill="#b02030"/>
<circle cx="62.5" cy="9.3" r="4.9" fill="#dc4450"/>
<circle cx="122.8" cy="60.0" r="2.8" fill="#cc3040"/>
<circle cx="5.0" cy="54.4" r="3.3" fill="#c3283a"/>
<circle cx="111.1" cy="31.1" r="4.8" fill="#b02030"/>
<circle cx="96.6" cy="68.6" r="4.0" fill="#a81c2c"/>
<circle cx="6.4" cy="60.7" r="3.4" fill="#c3283a"/>
<circle cx="79.9" cy="48.6" r="2.7" fill="#b02030"/>
<circle cx="41.1" cy="49.8" r="4.6" fill="#cc3040"/>
<circle cx="73.2" cy="10.0" r="2.7" fill="#d43846"/>
<circle cx="128.3" cy="31.9" r="3.2" fill="#a81c2c"/>
<circle cx="35.6" cy="42.7" r="3.9" fill="#a81c2c"/>
<circle cx="100.3" cy="69.6" r="4.1" fill="#d43846"/>
<circle cx="129.0" cy="61.8" r="2.6" fill="#a81c2c"/>
<circle cx="6.4" cy="45.6" r="5.5" fill="#d43846"/>
<circle cx="48.6" cy="65.0" r="5.3" fill="#c3283a"/>
<circle cx="75.1" cy="18.0" r="4.1" fill="#d43846"/>
<circle cx="14.0" cy="61.5" r="4.0" fill="#c3283a"/>
<circle cx="91.7" cy="25.6" r="5.2" fill="#a81c2c"/>
<circle cx="49.6" cy="19.8" r="5.3" fill="#dc4450"/>
<circle cx="57.3" cy="27.7" r="2.9" fill="#d43846"/>
<circle cx="47.2" cy="17.9" r="3.5" fill="#d43846"/>
<circle cx="98.1" cy="61.0" r="2.9" fill="#b02030"/>
<circle cx="93.0" cy="64.4" r="3.4" fill="#d43846"/>
<circle cx="4.8" cy="41.9" r="5.1" fill="#c3283a"/>
<circle cx="45.1" cy="36.4" r="3.3" fill="#c3283a"/>
<circle cx="34.2" cy="17.0" r="4.5" fill="#dc4450"/>
<circle cx="123.2" cy="35.0" r="3.3" fill="#cc3040"/>
<circle cx="38.9" cy="57.0" r="4.9" fill="#a81c2c"/>
<circle cx="116.3" cy="60.9" r="4.4" fill="#cc3040"/>
<circle cx="70.7" cy="52.9" r="2.6" fill="#dc4450"/>
<circle cx="51.9" cy="46.9" r="2.9" fill="#9a1a28"/>
<circle cx="34.9" cy="16.6" r="5.3" fill="#b02030"/>
<circle cx="19.2" cy="40.7" r="3.3" fill="#d43846"/>
<circle cx="96.5" cy="68.7" r="3.3" fill="#dc4450"/>
<circle cx="28.5" cy="42.1" r="4.5" fill="#c3283a"/>
<circle cx="18.8" cy="28.2" r="3.1" fill="#9a1a28"/>
<circle cx="63.6" cy="22.4" r="5.2" fill="#9a1a28"/>
<circle cx="57.2" cy="17.8" r="3.1" fill="#c3283a"/>
<circle cx="19.8" cy="47.7" r="3.5" fill="#d43846"/>
<circle cx="31.1" cy="46.4" r="5.2" fill="#dc4450"/>
<circle cx="114.4" cy="39.6" r="4.7" fill="#b02030"/>
<circle cx="47.3" cy="30.8" r="2.7" fill="#d43846"/>
<circle cx="74.1" cy="31.2" r="4.6" fill="#cc3040"/>
<circle cx="81.6" cy="61.8" r="3.1" fill="#d43846"/>
<circle cx="118.0" cy="40.8" r="4.4" fill="#a81c2c"/>
<circle cx="125.7" cy="58.4" r="5.1" fill="#c3283a"/>
<circle cx="13.3" cy="42.9" r="4.8" fill="#9a1a28"/>
<circle cx="60.4" cy="44.9" r="2.5" fill="#a81c2c"/>
<circle cx="122.5" cy="61.2" r="4.1" fill="#a81c2c"/>
<circle cx="128.2" cy="37.2" r="2.8" fill="#b02030"/>
<circle cx="16.7" cy="68.6" r="2.8" fill="#9a1a28"/>
<circle cx="94.2" cy="49.9" r="4.8" fill="#a81c2c"/>
<circle cx="7.6" cy="55.5" r="2.5" fill="#b02030"/>
<circle cx="27.6" cy="65.7" r="4.4" fill="#d43846"/>
<circle cx="126.9" cy="50.4" r="4.1" fill="#a81c2c"/>
<circle cx="91.0" cy="18.6" r="2.7" fill="#cc3040"/>
<circle cx="124.3" cy="33.3" r="3.3" fill="#9a1a28"/>
<circle cx="77.7" cy="10.3" r="3.4" fill="#a81c2c"/>
<circle cx="33.9" cy="31.8" r="5.0" fill="#b02030"/>
<circle cx="60.6" cy="23.4" r="3.2" fill="#a81c2c"/>
<circle cx="91.8" cy="30.1" r="2.6" fill="#a81c2c"/>
<circle cx="116.3" cy="52.9" r="2.7" fill="#b02030"/>
<circle cx="86.8" cy="65.6" r="3.2" fill="#c3283a"/>
<circle cx="90.6" cy="53.7" r="3.6" fill="#a81c2c"/>
<circle cx="22.9" cy="59.5" r="4.7" fill="#cc3040"/>
<circle cx="5.2" cy="45.6" r="3.1" fill="#9a1a28"/>
<circle cx="107.5" cy="29.7" r="3.2" fill="#9a1a28"/>
<circle cx="116.9" cy="27.2" r="4.4" fill="#cc3040"/>
<circle cx="21.5" cy="30.3" r="3.8" fill="#dc4450"/>
<circle cx="3.7" cy="49.6" r="5.3" fill="#c3283a"/>
<circle cx="25.0" cy="68.6" r="2.9" fill="#c3283a"/>
<circle cx="92.5" cy="23.1" r="3.8" fill="#dc4450"/>
<circle cx="116.2" cy="57.1" r="5.5" fill="#b02030"/>
<circle cx="40.8" cy="22.9" r="5.3" fill="#dc4450"/>
<circle cx="59.6" cy="28.2" r="4.7" fill="#9a1a28"/>
<circle cx="46.8" cy="30.5" r="3.0" fill="#c3283a"/>
<circle cx="6.6" cy="29.6" r="3.8" fill="#c3283a"/>
<circle cx="72.3" cy="55.3" r="3.6" fill="#9a1a28"/>
<circle cx="107.7" cy="60.7" r="3.8" fill="#c3283a"/>
<circle cx="91.9" cy="23.6" r="4.1" fill="#a81c2c"/>
<circle cx="22.3" cy="37.3" r="5.2" fill="#c3283a"/>
<circle cx="81.9" cy="25.1" r="4.4" fill="#a81c2c"/>
<circle cx="1.5" cy="31.0" r="2.7" fill="#c3283a"/>
<circle cx="31.0" cy="56.1" r="5.2" fill="#d43846"/>
<circle cx="45.4" cy="30.8" r="5.4" fill="#c3283a"/>
<circle cx="31.7" cy="54.4" r="3.4" fill="#d43846"/>
<circle cx="36.4" cy="54.2" r="4.3" fill="#9a1a28"/>
<circle cx="82.2" cy="66.6" r="2.6" fill="#b02030"/>
<circle cx="10.6" cy="57.0" r="3.9" fill="#9a1a28"/>
</g></g></svg>
<div class="t" id="r2" style="left:643px;top:1198.5px;font-size:19.5px;color:#3a4853;letter-spacing:1.65px">Eu urna in tempor</div>
<div class="t" id="n2a" style="right:291px;top:1197px;font-size:23px;font-weight:bold;color:#34424f;letter-spacing:0.6px">1,770</div>
<div class="t" id="n2b" style="right:79px;top:1197px;font-size:23px;font-weight:bold;color:#34424f;letter-spacing:0.6px">842</div>
</body></html>
